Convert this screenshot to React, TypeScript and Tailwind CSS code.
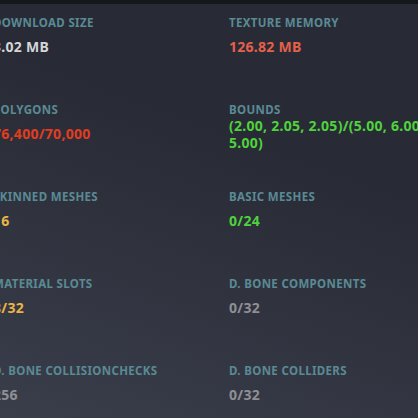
import React from "react";

type Stat = {
  label: string;
  value: string;
  color: string;
};

const stats: Stat[] = [
  { label: "DOWNLOAD SIZE", value: "3.02 MB", color: "text-[#d4d5d8]" },
  { label: "TEXTURE MEMORY", value: "126.82 MB", color: "text-[#e4604a]" },
  { label: "POLYGONS", value: "76,400/70,000", color: "text-[#e23c1f]" },
  { label: "BOUNDS", value: "(2.00, 2.05, 2.05)/(5.00, 6.00, 5.00)", color: "text-[#4fd23b]" },
  { label: "SKINNED MESHES", value: "16", color: "text-[#e9b545]" },
  { label: "BASIC MESHES", value: "0/24", color: "text-[#4fd23b]" },
  { label: "MATERIAL SLOTS", value: "8/32", color: "text-[#e9b545]" },
  { label: "D. BONE COMPONENTS", value: "0/32", color: "text-[#8e8f94]" },
  { label: "D. BONE COLLISIONCHECKS", value: "256", color: "text-[#8e8f94]" },
  { label: "D. BONE COLLIDERS", value: "0/32", color: "text-[#8e8f94]" },
];

function StatCell({ stat }: { stat: Stat }) {
  return (
    <div className="flex h-[87px] flex-col pr-4">
      <div className="text-[11.5px] leading-[13px] font-bold tracking-[0.03em] text-[#5a8a94] whitespace-nowrap">
        {stat.label}
      </div>
      <div className="flex h-[35px] items-center">
        <div className={`text-[14px] leading-[17px] font-bold tracking-[0.02em] ${stat.color}`}>
          {stat.value}
        </div>
      </div>
    </div>
  );
}

export default function App() {
  return (
    <div
      className="flex h-[418px] w-[418px] flex-col overflow-hidden bg-[linear-gradient(200deg,#282b36_35%,#3a3e4a)]"
      style={{ fontFamily: '"Noto Sans", "Open Sans", sans-serif' }}
    >
      <div className="h-[4px] shrink-0 bg-[#14171c]" />
      <div className="-ml-[7px] grid grid-cols-[236px_236px] pt-[12px]">
        {stats.map((s) => (
          <StatCell key={s.label} stat={s} />
        ))}
      </div>
    </div>
  );
}
